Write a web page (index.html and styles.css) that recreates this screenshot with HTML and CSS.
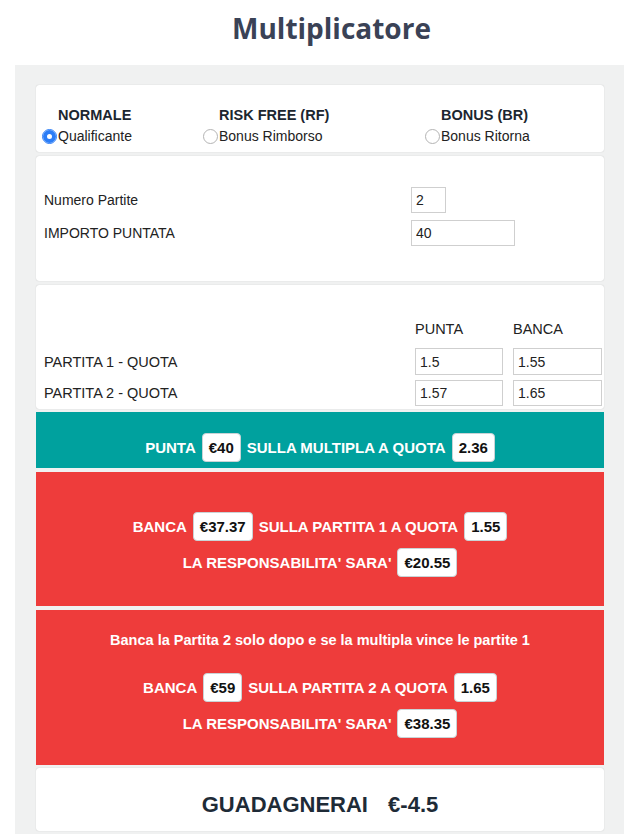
FILE: index.html
```html
<!DOCTYPE html>
<html lang="it">

<head>
    <meta charset="UTF-8">
    <meta name="viewport" content="width=device-width, initial-scale=1.0">
    <title>Multiplicatore</title>
    <link rel="stylesheet" href="styles.css">
</head>

<body>
    <h1 class="title">Multiplicatore</h1>
    <div class="panel">
        <!-- tipo di multipla -->
        <div class="card modes">
            <div class="mode">
                <b class="mode-name">NORMALE</b>
                <label><input type="radio" name="mode" checked>Qualificante</label>
            </div>
            <div class="mode">
                <b class="mode-name">RISK FREE (RF)</b>
                <label><input type="radio" name="mode">Bonus Rimborso</label>
            </div>
            <div class="mode">
                <b class="mode-name">BONUS (BR)</b>
                <label><input type="radio" name="mode">Bonus Ritorna</label>
            </div>
        </div>

        <div class="card stake">
            <div class="field-row">
                <span>Numero Partite</span>
                <input class="in-small" type="text" value="2">
            </div>
            <div class="field-row">
                <span>IMPORTO PUNTATA</span>
                <input class="in-wide" type="text" value="40">
            </div>
        </div>

        <!-- quote -->
        <div class="card odds">
            <div class="odds-row odds-head">
                <span></span>
                <span>PUNTA</span>
                <span>BANCA</span>
            </div>
            <div class="odds-row">
                <span>PARTITA 1 - QUOTA</span>
                <input type="text" value="1.5">
                <input type="text" value="1.55">
            </div>
            <div class="odds-row">
                <span>PARTITA 2 - QUOTA</span>
                <input type="text" value="1.57">
                <input type="text" value="1.65">
            </div>
        </div>

        <div class="result teal">
            <p class="line"><span>PUNTA</span><span class="tag">€40</span><span>SULLA MULTIPLA A QUOTA</span><span class="tag">2.36</span></p>
        </div>

        <div class="result red red-first">
            <p class="line"><span>BANCA</span><span class="tag">€37.37</span><span>SULLA PARTITA 1 A QUOTA</span><span class="tag">1.55</span></p>
            <p class="line"><span>LA RESPONSABILITA' SARA'</span><span class="tag">€20.55</span></p>
        </div>

        <div class="result red red-second">
            <p class="note">Banca la Partita 2 solo dopo e se la multipla vince le partite 1</p>
            <p class="line"><span>BANCA</span><span class="tag">€59</span><span>SULLA PARTITA 2 A QUOTA</span><span class="tag">1.65</span></p>
            <p class="line"><span>LA RESPONSABILITA' SARA'</span><span class="tag">€38.35</span></p>
        </div>

        <div class="card total">GUADAGNERAI <span class="total-value">€-4.5</span></div>
    </div>
</body>

</html>
```

FILE: styles.css
```css
* {
    margin: 0;
    padding: 0;
    box-sizing: border-box;
}

body {
    font-family: "Liberation Sans", Arial, sans-serif;
    font-size: 14px;
    color: #222;
    background: #fff;
}

.title {
    font-family: "Open Sans", sans-serif;
    font-size: 28px;
    font-weight: 700;
    color: #3a4256;
    text-align: center;
    line-height: 38px;
    padding: 9px 0 18px 26px;
}

.panel {
    width: 609px;
    margin-left: 15px;
    background: #f0f1f1;
    padding: 20px 20px 4px 21px;
}

.card {
    background: #fff;
    border-radius: 3px;
    box-shadow: 0 0 1px rgba(0, 0, 0, 0.25);
    margin-bottom: 4px;
}

/* tipo */
.modes {
    display: grid;
    grid-template-columns: 161px 222px 1fr;
    padding: 21px 0 7px 6px;
}

.mode-name {
    display: block;
    padding-left: 16px;
    font-size: 14.5px;
    line-height: 18px;
    color: #1c2630;
}

.mode label {
    display: block;
    margin-top: 3px;
    font-size: 14px;
    line-height: 18px;
    color: #222;
}

.mode input {
    appearance: none;
    -webkit-appearance: none;
    width: 15px;
    height: 15px;
    border: 1px solid #b4b4b4;
    border-radius: 50%;
    background: #fff;
    margin: 0 1px 0 0;
    vertical-align: -3px;
}

.mode input:checked {
    border-color: #2b7df7;
    box-shadow: inset 0 0 0 4px #2b7df7;
}

/* importo */
.stake {
    padding: 31px 0 35px 8px;
}

.field-row {
    display: grid;
    grid-template-columns: 357px auto;
    column-gap: 10px;
    align-items: center;
    margin-bottom: 7px;
}

.field-row:last-child {
    margin-bottom: 0;
}

input[type="text"] {
    height: 26px;
    border: 1px solid #cfcfcf;
    padding: 0 4px;
    font-family: "Liberation Sans", Arial, sans-serif;
    font-size: 14px;
    color: #222;
    outline: none;
}

.in-small {
    width: 35px;
}

.in-wide {
    width: 104px;
}

/* quote */
.odds {
    padding: 36px 0 3px 8px;
    margin-bottom: 3px;
}

.odds-row {
    display: grid;
    grid-template-columns: 361px 88px 89px;
    column-gap: 10px;
    align-items: center;
    margin-bottom: 5px;
}

.odds-row span {
    font-size: 14.5px;
}

.odds-row input {
    width: 100%;
    height: 27px;
}

.odds-head {
    margin-bottom: 11px;
    line-height: 16px;
}

.odds-row:last-child {
    margin-bottom: 0;
}

.odds-row:last-child input {
    height: 26px;
}

/* risultati */
.result {
    color: #fff;
    font-size: 15px;
    font-weight: 700;
    margin-bottom: 4px;
}

.teal {
    background: #00a19e;
    padding: 21px 0 6px;
}

.red {
    background: #ee3c3b;
}

.red-first {
    padding: 40px 0 29px;
}

.red-second {
    padding: 22px 0 27px;
    margin-bottom: 3px;
}

.line {
    display: flex;
    justify-content: center;
    align-items: center;
    gap: 6px;
    height: 29px;
    margin-bottom: 7px;
}

.line:last-child {
    margin-bottom: 0;
}

.note {
    font-size: 14.5px;
    line-height: 16px;
    text-align: center;
    margin-bottom: 25px;
}

.tag {
    background: #fff;
    color: #111;
    border: 1px solid #c9d3d6;
    border-radius: 4px;
    padding: 0 6px;
    line-height: 27px;
}

.total {
    font-size: 22px;
    font-weight: 700;
    color: #1e2b37;
    text-align: center;
    line-height: 26px;
    padding: 24px 0 13px;
}

.total-value {
    margin-left: 14px;
}
```
